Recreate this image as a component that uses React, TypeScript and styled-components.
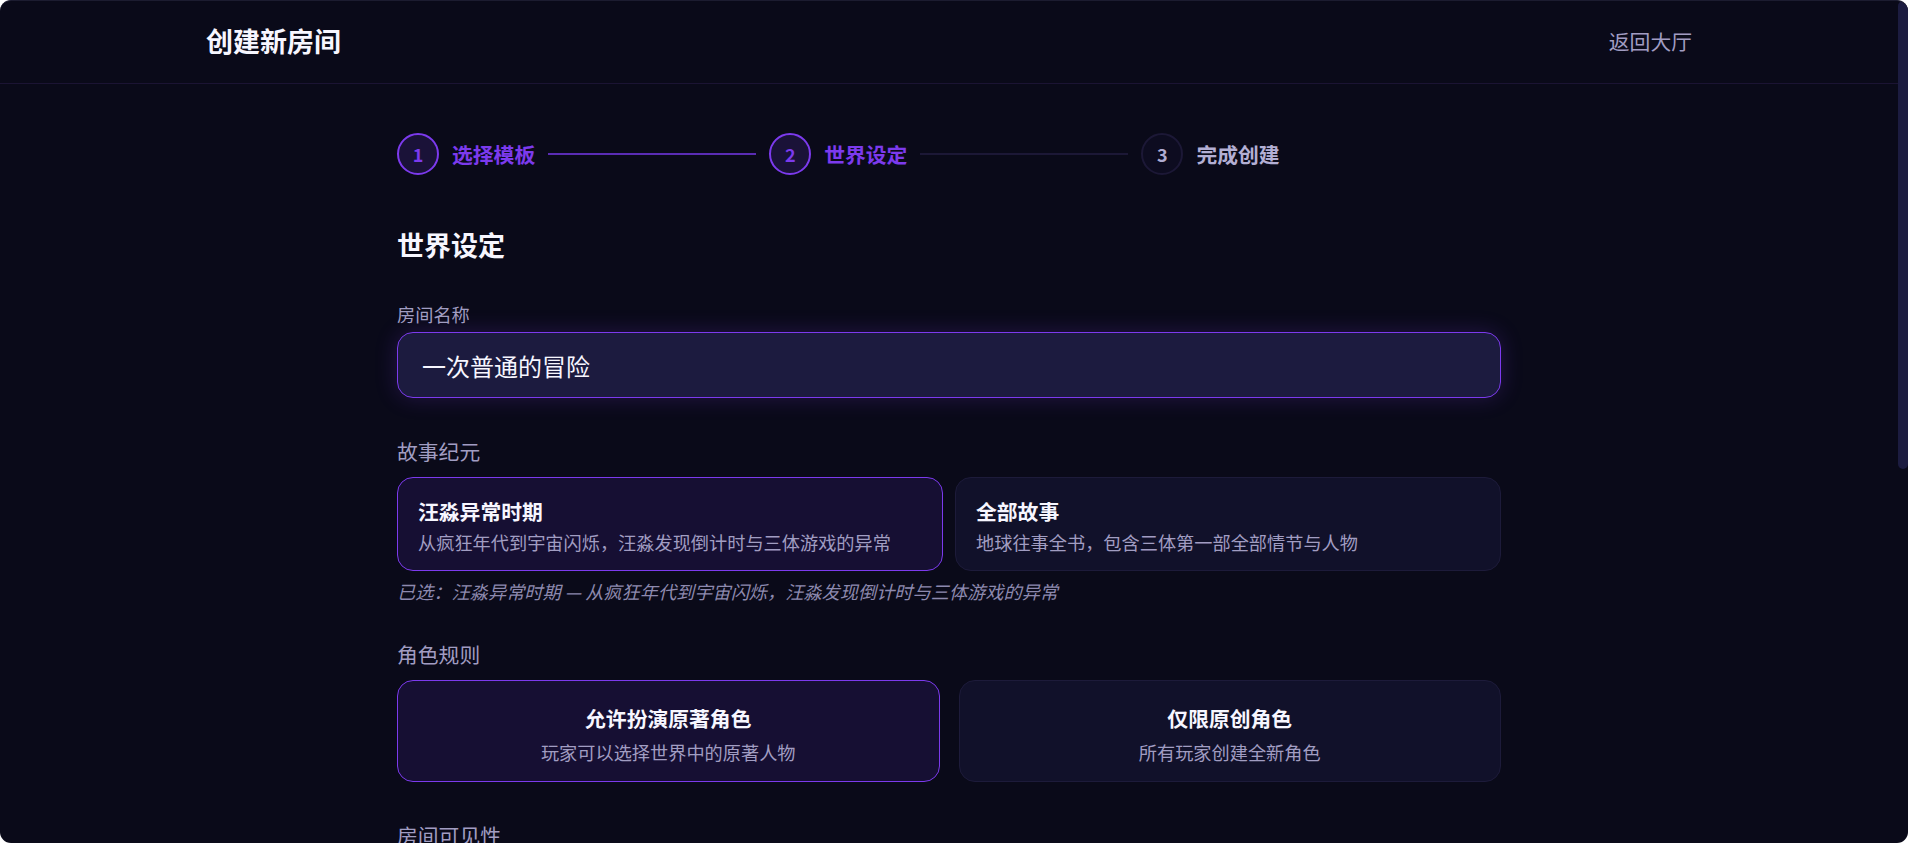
import React from 'react';
import styled, {createGlobalStyle} from 'styled-components';

const GlobalStyle = createGlobalStyle`
    html, body {
        margin: 0;
        padding: 0;
        background: #ffffff;
        height: 100%;
    }
    #root {
        height: 100%;
    }
    * {
        box-sizing: border-box;
    }
`;

const eras = [
    {id: 'wang', title: '汪淼异常时期', desc: '从疯狂年代到宇宙闪烁，汪淼发现倒计时与三体游戏的异常'},
    {id: 'all', title: '全部故事', desc: '地球往事全书，包含三体第一部全部情节与人物'},
];

const roles = [
    {id: 'canon', title: '允许扮演原著角色', desc: '玩家可以选择世界中的原著人物'},
    {id: 'original', title: '仅限原创角色', desc: '所有玩家创建全新角色'},
];

const visibility = [
    {id: 'public', title: '公开房间', desc: '任何人都可以在大厅中看到并加入'},
    {id: 'private', title: '私密房间', desc: '仅受邀玩家可以加入'},
];

const playerCounts = [2, 3, 4, 5, 6, 8];

const steps = [
    {n: 1, label: '选择模板', state: 'done'},
    {n: 2, label: '世界设定', state: 'active'},
    {n: 3, label: '完成创建', state: 'todo'},
] as const;

const App: React.FunctionComponent = () => {
    const [era, setEra] = React.useState('wang');
    const [role, setRole] = React.useState('canon');
    const [vis, setVis] = React.useState('public');
    const [players, setPlayers] = React.useState(4);
    const [thumb, setThumb] = React.useState({top: 0, height: 0});
    const scrollRef = React.useRef<HTMLDivElement>(null);
    const selectedEra = eras.find(e => e.id === era)!;

    // custom scroll indicator, the native bar is hidden
    const measure = React.useCallback(() => {
        const el = scrollRef.current;
        if (!el) return;
        const ratio = el.clientHeight / el.scrollHeight;
        setThumb({
            top: el.scrollTop * ratio,
            height: ratio >= 1 ? 0 : el.clientHeight * ratio,
        });
    }, []);

    React.useLayoutEffect(() => {
        measure();
        window.addEventListener('resize', measure);
        return () => window.removeEventListener('resize', measure);
    }, [measure]);

    return (
        <>
            <GlobalStyle/>
            <Frame>
                <Scroller ref={scrollRef} onScroll={measure}>
                    <Header>
                        <HeaderInner>
                            <Title>创建新房间</Title>
                            <BackLink href="#">返回大厅</BackLink>
                        </HeaderInner>
                    </Header>
                    <Main>
                        <Stepper>
                            {steps.map((s, i) => (
                                <React.Fragment key={s.n}>
                                    <Step>
                                        <StepCircle $state={s.state}>{s.n}</StepCircle>
                                        <StepLabel $state={s.state}>{s.label}</StepLabel>
                                    </Step>
                                    {i < steps.length - 1 && <Connector $lit={s.state === 'done'}/>}
                                </React.Fragment>
                            ))}
                        </Stepper>

                        <Heading>世界设定</Heading>

                        <NameLabel>房间名称</NameLabel>
                        <NameInput defaultValue="一次普通的冒险" autoFocus/>

                        <Section>
                            <SectionLabel>故事纪元</SectionLabel>
                            <CardGrid $gap={12}>
                                {eras.map(e => (
                                    <EraCard key={e.id} $selected={era === e.id} onClick={() => setEra(e.id)}>
                                        <CardTitle>{e.title}</CardTitle>
                                        <CardDesc>{e.desc}</CardDesc>
                                    </EraCard>
                                ))}
                            </CardGrid>
                            <Hint>已选：{selectedEra.title} — {selectedEra.desc}</Hint>
                        </Section>

                        <Section $tight>
                            <SectionLabel>角色规则</SectionLabel>
                            <CardGrid $gap={19}>
                                {roles.map(r => (
                                    <OptionCard key={r.id} $selected={role === r.id} onClick={() => setRole(r.id)}>
                                        <CardTitle>{r.title}</CardTitle>
                                        <OptionDesc>{r.desc}</OptionDesc>
                                    </OptionCard>
                                ))}
                            </CardGrid>
                        </Section>

                        <Section>
                            <SectionLabel>房间可见性</SectionLabel>
                            <CardGrid $gap={19}>
                                {visibility.map(v => (
                                    <OptionCard key={v.id} $selected={vis === v.id} onClick={() => setVis(v.id)}>
                                        <CardTitle>{v.title}</CardTitle>
                                        <OptionDesc>{v.desc}</OptionDesc>
                                    </OptionCard>
                                ))}
                            </CardGrid>
                        </Section>

                        <Section>
                            <SectionLabel>最大玩家数</SectionLabel>
                            <ChipRow>
                                {playerCounts.map(n => (
                                    <Chip key={n} $selected={players === n} onClick={() => setPlayers(n)}>
                                        {n} 人
                                    </Chip>
                                ))}
                            </ChipRow>
                        </Section>

                        <Section>
                            <SectionLabel>房间简介</SectionLabel>
                            <Intro placeholder="简单介绍一下这个房间的玩法与氛围（选填）"/>
                        </Section>

                        <Actions>
                            <GhostButton>上一步</GhostButton>
                            <PrimaryButton>下一步</PrimaryButton>
                        </Actions>
                    </Main>
                </Scroller>
                <Rail>
                    <Thumb style={{marginTop: thumb.top, height: thumb.height}}/>
                </Rail>
            </Frame>
        </>
    );
}

const purple = '#7c3aed';
const muted = '#a19dc2';

const Frame = styled.div`
    display: flex;
    height: 100vh;
    overflow: hidden;
    background: #0a0a19;
    border-top: 1px solid #1c1c30;
    border-radius: 11px;
    font-family: "Noto Sans CJK SC", "Noto Sans", sans-serif;
    color: #f4f3ff;
`;

const Scroller = styled.div`
    flex: 1;
    min-width: 0;
    overflow-y: auto;
    scrollbar-width: none;
    &::-webkit-scrollbar {
        display: none;
    }
`;

const Rail = styled.div`
    flex: none;
    width: 10px;
    display: flex;
    flex-direction: column;
`;

const Thumb = styled.div`
    width: 100%;
    background: #1c1c40;
    border-radius: 5px;
`;

const Header = styled.header`
    height: 83px;
    border-bottom: 1px solid #1b1433;
    display: flex;
    align-items: center;
`;

const HeaderInner = styled.div`
    width: 1486px;
    margin: -2px auto 0;
    display: flex;
    justify-content: space-between;
    align-items: center;
`;

const Title = styled.h1`
    margin: 0;
    font-size: 27px;
    line-height: 36px;
    font-weight: 700;
    color: #f7f6ff;
`;

const BackLink = styled.a`
    font-size: 20.8px;
    line-height: 30px;
    color: ${muted};
    text-decoration: none;
`;

const Main = styled.main`
    width: 1104px;
    margin: 0 auto;
    padding: 49px 0 84px;
`;

const Stepper = styled.div`
    display: flex;
    align-items: center;
    height: 42px;
`;

const Step = styled.div`
    display: flex;
    align-items: center;
    gap: 13px;
`;

type StepState = 'done' | 'active' | 'todo';

const StepCircle = styled.div<{$state: StepState}>`
    width: 42px;
    height: 42px;
    border-radius: 50%;
    display: flex;
    align-items: center;
    justify-content: center;
    font-size: 18px;
    font-weight: 700;
    border: 2.5px solid ${p => p.$state === 'todo' ? '#1c1836' : purple};
    background: ${p => p.$state === 'todo' ? '#0d0c20' : '#1a1238'};
    color: ${p => p.$state === 'todo' ? '#b0acd2' : purple};
`;

const StepLabel = styled.span<{$state: StepState}>`
    font-size: 20.8px;
    line-height: 30px;
    font-weight: 600;
    color: ${p => p.$state === 'todo' ? '#b3afd4' : purple};
`;

const Connector = styled.div<{$lit: boolean}>`
    width: 208px;
    height: 2px;
    margin: 0 13px;
    background: ${p => p.$lit ? '#5a2cb4' : '#1c1836'};
`;

const Heading = styled.h2`
    margin: 52px 0 0;
    font-size: 27px;
    line-height: 36px;
    font-weight: 700;
    color: #f7f6ff;
`;

const NameLabel = styled.label`
    display: block;
    margin-top: 38px;
    font-size: 18.2px;
    line-height: 27px;
    color: ${muted};
`;

const NameInput = styled.input`
    display: block;
    width: 100%;
    height: 66px;
    margin-top: 4px;
    padding: 0 24px;
    font-family: inherit;
    font-size: 24px;
    color: #f7f6ff;
    caret-color: #f7f6ff;
    background: #1c1b3f;
    border: 1.5px solid ${purple};
    border-radius: 16px;
    outline: none;
    box-shadow: 0 0 22px rgba(124, 58, 237, 0.22);
`;

const Section = styled.section<{$tight?: boolean}>`
    margin-top: ${p => p.$tight ? '34px' : '38px'};
`;

const SectionLabel = styled.div`
    font-size: 20.8px;
    line-height: 31px;
    color: ${muted};
    margin-bottom: 10px;
`;

const CardGrid = styled.div<{$gap: number}>`
    display: grid;
    grid-template-columns: 1fr 1fr;
    gap: ${p => p.$gap}px;
`;

const cardLook = (selected: boolean) => `
    border: 1.3px solid ${selected ? purple : '#1d1b3a'};
    background: ${selected ? '#160f33' : '#11112a'};
    border-radius: 16px;
    cursor: pointer;
`;

const EraCard = styled.div<{$selected: boolean}>`
    ${p => cardLook(p.$selected)}
    height: 94px;
    padding: 18px 20px 0;
`;

const OptionCard = styled.div<{$selected: boolean}>`
    ${p => cardLook(p.$selected)}
    height: 102px;
    padding: 22px 20px 0;
    text-align: center;
`;

const CardTitle = styled.div`
    font-size: 20.8px;
    line-height: 31px;
    font-weight: 700;
    color: #f7f6ff;
`;

const CardDesc = styled.div`
    margin-top: 2px;
    font-size: 18.2px;
    line-height: 27px;
    color: ${muted};
`;

const OptionDesc = styled(CardDesc)`
    margin-top: 5px;
`;

const Hint = styled.div`
    margin-top: 7px;
    font-size: 18.2px;
    line-height: 27px;
    font-style: italic;
    color: #8d89ae;
`;

const ChipRow = styled.div`
    display: grid;
    grid-template-columns: repeat(6, 1fr);
    gap: 12px;
`;

const Chip = styled.button<{$selected: boolean}>`
    ${p => cardLook(p.$selected)}
    height: 66px;
    font-family: inherit;
    font-size: 20.8px;
    font-weight: 600;
    color: ${p => p.$selected ? '#f7f6ff' : muted};
`;

const Intro = styled.textarea`
    display: block;
    width: 100%;
    height: 140px;
    padding: 18px 24px;
    resize: none;
    font-family: inherit;
    font-size: 18.2px;
    color: #f7f6ff;
    background: #1c1b3f;
    border: 1.3px solid #1d1b3a;
    border-radius: 16px;
    outline: none;
    &::placeholder {
        color: #6e6a90;
    }
`;

const Actions = styled.div`
    display: flex;
    justify-content: space-between;
    margin-top: 48px;
`;

const GhostButton = styled.button`
    height: 56px;
    padding: 0 36px;
    font-family: inherit;
    font-size: 20.8px;
    color: ${muted};
    background: transparent;
    border: 1.3px solid #2a2650;
    border-radius: 14px;
    cursor: pointer;
`;

const PrimaryButton = styled(GhostButton)`
    color: #ffffff;
    font-weight: 600;
    background: ${purple};
    border-color: ${purple};
`;

export default App;
